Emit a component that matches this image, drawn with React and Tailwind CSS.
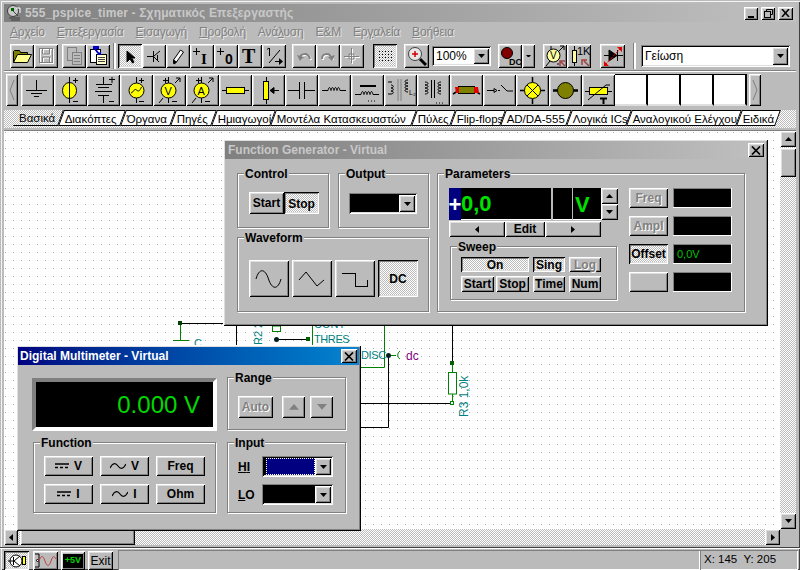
import React from 'react';

const raised = 'shadow-[inset_1px_1px_0_#fff,inset_-1px_-1px_0_#000,inset_2px_2px_0_#dedede,inset_-2px_-2px_0_#808080]';
const pressed = 'shadow-[inset_1px_1px_0_#000,inset_-1px_-1px_0_#fff,inset_2px_2px_0_#808080,inset_-2px_-2px_0_#dedede]';
const sunken = 'shadow-[inset_1px_1px_0_#808080,inset_-1px_-1px_0_#fff,inset_2px_2px_0_#000,inset_-2px_-2px_0_#dedede]';
const dither = 'bg-[repeating-conic-gradient(#fff_0_25%,#bbb_0_50%)] bg-[length:2px_2px]';
const disabled = 'text-[#808080] [text-shadow:1px_1px_0_#fff]';

const Btn = ({ down, className = '', children }) => (
  <div className={`flex items-center justify-center shrink-0 ${down ? `${pressed} ${dither}` : `${raised} bg-[#bbb]`} ${className}`}>{children}</div>
);

const Tri = ({ dir = 'down', color = '#000', size = 7 }) => {
  const pts = { down: '0,0 7,0 3.5,4', up: '0,4 7,4 3.5,0', left: '4,0 4,7 0,3.5', right: '0,0 0,7 4,3.5' }[dir];
  const vb = dir === 'left' || dir === 'right' ? '0 0 4 7' : '0 0 7 4';
  const w = dir === 'left' || dir === 'right' ? (size * 4) / 7 : size;
  const h = dir === 'left' || dir === 'right' ? size : (size * 4) / 7;
  return <svg width={w} height={h} viewBox={vb}><polygon points={pts} fill={color} /></svg>;
};

const Ico = ({ w = 24, h = 24, children }) => (
  <svg width={w} height={h} viewBox={`0 0 ${w} ${h}`} fill="none" stroke="#000">{children}</svg>
);

const Pm = ({ x = 21, top = 6, bot = 27 }) => (
  <path d={`M${x - 2} ${top}.5h5M${x + 0.5} ${top - 2}v5M${x - 2} ${bot}.5h5`} />
);

/* first toolbar */
const tools = {
  open: (
    <Ico>
      <path d="M3.5 18.5V7.5l1-1h5l1 2h7v2" fill="#808000" />
      <path d="M3.5 18.5l4-8h14l-4 8z" fill="#ffff90" />
    </Ico>
  ),
  save: (
    <Ico>
      <g stroke="#fff" transform="translate(1 1)"><rect x="5.5" y="4.5" width="13" height="14" /><path d="M8.5 5v5h7V5M8.5 18v-5h7v5" /></g>
      <g stroke="#808080"><rect x="5.5" y="4.5" width="13" height="14" /><path d="M8.5 5v5h7V5M8.5 18v-5h7v5" /></g>
    </Ico>
  ),
  copy: (
    <Ico>
      <g stroke="#808080" fill="#bbb"><rect x="5.5" y="3.5" width="9" height="13" /><rect x="10.5" y="8.5" width="9" height="12" /><path d="M12 11.5h6M12 14.5h6M12 17.5h6" /></g>
    </Ico>
  ),
  paste: (
    <Ico>
      <rect x="4.5" y="5.5" width="10" height="13" fill="#fff" />
      <rect x="10.5" y="10.5" width="10" height="10" fill="#ffffd0" />
      <path d="M12 13.5h7M12 15.5h7M12 17.5h7" stroke="#404040" />
      <rect x="7" y="2" width="6" height="3" fill="#0000c0" stroke="none" />
      <path d="M9 5l4 5" stroke="#0000c0" strokeWidth="2" />
      <path d="M11 11h4v-4z" fill="#0000c0" stroke="none" />
    </Ico>
  ),
  arrow: (
    <Ico>
      <path d="M9 7v11l3-3 2.500 4 1.500-1-2.500-4H17z" fill="#000" />
    </Ico>
  ),
  wire: (
    <Ico>
      <path d="M5 12.500h6M11.500 7v11M12 12l6-5M12 13l5 5M15.500 11v6" />
    </Ico>
  ),
  pencil: (
    <Ico>
      <path d="M8 20l-.5-4 7-10 3 2-7 10z" fill="#fff" />
      <path d="M8 20l-.5-4 3 2z" fill="#000" />
    </Ico>
  ),
  plusI: (
    <Ico>
      <path d="M6.500 4v7M3 7.500h7" />
      <text x="11" y="20" fontSize="15" fontWeight="700" fill="#000" stroke="none" fontFamily="'Liberation Serif',serif">I</text>
    </Ico>
  ),
  plus0: (
    <Ico>
      <path d="M6.500 4v7M3 7.500h7" />
      <text x="11" y="20" fontSize="14" fontWeight="700" fill="#000" stroke="none" fontFamily="'Liberation Sans',sans-serif">0</text>
    </Ico>
  ),
  text: (
    <Ico>
      <text x="4" y="19" fontSize="20" fontWeight="700" fill="#000" stroke="none" fontFamily="'Liberation Serif',serif">T</text>
    </Ico>
  ),
  rot: (
    <Ico>
      <path d="M7.500 4v8M5 5.500l2-1.500M7 19l11-13M13 17.500h5" />
      <path d="M17 14v7l4-3.500z" fill="#000" stroke="none" />
    </Ico>
  ),
  undo: (
    <Ico>
      <path d="M8 15c0-6 8-7 10 0" stroke="#fff" strokeWidth="2" transform="translate(1 1)" />
      <path d="M8 15c0-6 8-7 10 0" stroke="#808080" strokeWidth="2" />
      <path d="M5 11l3 6 4-4z" fill="#808080" stroke="none" />
    </Ico>
  ),
  redo: (
    <Ico>
      <path d="M6 15c0-6 8-7 10 0" stroke="#fff" strokeWidth="2" transform="translate(1 1)" />
      <path d="M6 15c0-6 8-7 10 0" stroke="#808080" strokeWidth="2" />
      <path d="M19 11l-3 6-4-4z" fill="#808080" stroke="none" />
    </Ico>
  ),
  cross: (
    <Ico>
      <path d="M12.500 5v15M5 13.500h15M10 11h5v5h-5z" stroke="#fff" />
      <path d="M11.500 4v15M4 12.500h15M9 10h5v5H9z" stroke="#808080" />
    </Ico>
  ),
  grid: (
    <Ico>
      <path d="M6 7.500h13M6 10.500h13M6 13.500h13M6 16.500h13" stroke="#000" strokeDasharray="1 2" />
    </Ico>
  ),
  zoom: (
    <Ico>
      <path d="M15 15l6 6" strokeWidth="3" />
      <circle cx="10" cy="10" r="6.500" fill="#e8e8e8" stroke="#404040" />
      <path d="M7 10h6M10 7v6" stroke="#d00000" strokeWidth="1.500" />
    </Ico>
  ),
  dc: (
    <Ico>
      <circle cx="9" cy="9" r="5.500" fill="#800000" />
      <text x="11" y="21" fontSize="9" fontWeight="700" fill="#000" stroke="none" fontFamily="'Liberation Sans',sans-serif">DC</text>
    </Ico>
  ),
  volt: (
    <Ico>
      <path d="M3 22l4-5M16 7l5-5M17 2h4v4M8 2v4M14 20h2" />
      <circle cx="10.500" cy="11.500" r="6.500" fill="#ffffa0" />
      <text x="7" y="15" fontSize="10" fill="#000" stroke="none" fontFamily="'Liberation Sans',sans-serif">V</text>
      <path d="M22 22l-4-4M17 22v-5h5" stroke="#a04040" strokeWidth="1.500" />
    </Ico>
  ),
  res: (
    <Ico>
      <path d="M7.500 2v20" />
      <rect x="5.500" y="6.500" width="4" height="12" fill="#ffffa0" />
      <text x="10" y="11" fontSize="11" fill="#000" stroke="none" fontFamily="'Liberation Sans',sans-serif">1K</text>
      <path d="M22 22l-5-5M15 21v-5h5" stroke="#a04040" strokeWidth="1.500" />
    </Ico>
  ),
  diode: (
    <Ico>
      <path d="M3 11.500h19M16.500 6v11" />
      <path d="M8 6v11l8-5.500z" fill="#000" />
      <path d="M4 21L20 4" stroke="#e00000" strokeDasharray="3 1" />
      <path d="M3 22v-5l5 5zM21 3v5l-5-5z" fill="#e00000" stroke="none" />
    </Ico>
  ),
};

/* component palette */
const Palette = ({ children }) => <Ico w={33} h={32}>{children}</Ico>;
const parts = [
  <Palette key="gnd"><path d="M15.500 6v10M5 16.500h21M10 19.500h11M13 22.500h5" /></Palette>,
  <Palette key="dci"><path d="M15.500 3v26" /><ellipse cx="15.500" cy="16.500" rx="7" ry="8" fill="#ffff00" /><path d="M15.500 8v17" /><Pm /></Palette>,
  <Palette key="bat"><path d="M16.500 3v7M9 10.500h16M11 13.500h11M8 17.500h17M11 21.500h11M16.500 22v7" /><path d="M22 5.500h6M25 3v6M22 27.500h5" /></Palette>,
  <Palette key="ac"><path d="M16.500 3v6M16.500 23v6" /><circle cx="16.500" cy="16.500" r="7.500" fill="#ffff00" /><path d="M11 19c3-1 3-5 5.500-3s3 1 5-3" /><Pm x={21} /></Palette>,
  <Palette key="vm"><path d="M15.500 3v6M15.500 23v6M6 29l4-5M22 9l5-5M23 4h4v4" /><circle cx="15.500" cy="16.500" r="7.500" fill="#ffff00" /><text x="11.500" y="21" fontSize="11" fill="#000" stroke="none" fontFamily="'Liberation Sans',sans-serif">V</text><path d="M10 6.500h5M12.500 4v5M19 27.500h5" /></Palette>,
  <Palette key="am"><path d="M15.500 3v6M15.500 23v6M6 29l4-5M22 9l5-5M23 4h4v4" /><circle cx="15.500" cy="16.500" r="7.500" fill="#ffff00" /><text x="11.500" y="21" fontSize="11" fill="#000" stroke="none" fontFamily="'Liberation Sans',sans-serif">A</text><path d="M10 6.500h5M12.500 4v5M19 27.500h5" /></Palette>,
  <Palette key="r"><path d="M3 16.500h27" /><rect x="7.500" y="13.500" width="18" height="6" fill="#ffff00" /></Palette>,
  <Palette key="pot"><path d="M14.500 3v27" /><rect x="11.500" y="7.500" width="5" height="18" fill="#ffff00" /><path d="M18 16.500h9M18 16.500l4-3v6z" fill="#000" /></Palette>,
  <Palette key="c"><path d="M3 16.500h11M14.500 8v17M19.500 8v17M20 16.500h10" /></Palette>,
  <Palette key="l"><path d="M4 16.500h6c1-4 2-4 3 0 1-4 2-4 3 0 1-4 2-4 3 0 1-4 2-4 3 0h6" /></Palette>,
  <Palette key="lc"><path d="M4 20.500h6c1-4 2-4 3 0 1-4 2-4 3 0 1-4 2-4 3 0 1-4 2-4 3 0h6" /><path d="M9 12h16" strokeWidth="2" /><path d="M17 27h1M20 27h1M23 27h1" /></Palette>,
  <Palette key="xf"><path d="M7 11c3 0 3 3 0 3 3 0 3 3 0 3 3 0 3 3 0 3h-3M4 8h4" /><path d="M14 5v22M17 5v22" stroke="#808080" /><path d="M24 6c-4 0-4 3 0 3-4 0-4 3 0 3-4 0-4 3 0 3-4 0-4 3 0 3" /><text x="25" y="21" fontSize="7" fill="#000" stroke="none" fontFamily="'Liberation Sans',sans-serif">L₂</text></Palette>,
  <Palette key="xf2"><path d="M8 8c4 0 4 3 0 3 4 0 4 3 0 3 4 0 4 3 0 3 4 0 4 3 0 3" /><path d="M14.500 6v18M17.500 6v18" /><path d="M24 8c-4 0-4 3 0 3-4 0-4 3 0 3-4 0-4 3 0 3-4 0-4 3 0 3" /><path d="M19 29h1M22 29h1M25 29h1" /></Palette>,
  <Palette key="rel"><path d="M3 20l5-3M25 17l5 3" strokeWidth="1.500" /><rect x="8.500" y="12.500" width="16" height="7" fill="#808000" /><path d="M5 13h4v6H6zM24 13h4l1 6h-5z" fill="#e00000" stroke="none" /></Palette>,
  <Palette key="sw"><path d="M4 16.500h7M11 14.500l3 2-3 2zM15 16.500h2M18 11l6 6h6" /></Palette>,
  <Palette key="lamp"><path d="M16.500 3v5M16.500 25v5M4 16.500h5M24 16.500h5" strokeWidth="1.500" /><circle cx="16.500" cy="16.500" r="8" fill="#ffff00" /><path d="M11 11l11 11M22 11L11 22" /></Palette>,
  <Palette key="mot"><path d="M4 16.500h6M23 16.500h6" strokeWidth="2.500" /><circle cx="16.500" cy="16.500" r="8" fill="#808000" /></Palette>,
  <Palette key="var"><path d="M3 17.500h27" /><rect x="7.500" y="13.500" width="18" height="7" fill="#ffff00" /><path d="M6 26l18-15h4" /><path d="M18 24.500h7M21.500 25v5" strokeWidth="2" /></Palette>,
];

const menus = [
  ['', 'Α', 'ρχείο'],
  ['', 'Ε', 'πεξεργασία'],
  ['', 'Ε', 'ισαγωγή'],
  ['', 'Π', 'ροβολή'],
  ['Ανά', 'λ', 'υση'],
  ['', '', 'E&M'],
  ['Ερ', 'γ', 'αλεία'],
  ['', 'Β', 'οήθεια'],
];

const tabs = [
  ['Βασικά', 'w-[45px]'],
  ['Διακόπτες', 'w-[62px]'],
  ['Όργανα', 'w-[50px]'],
  ['Πηγές', 'w-[41px]'],
  ['Ημιαγωγοί', 'w-[59px]'],
  ['Μοντέλα Κατασκευαστών', 'w-[141px]'],
  ['Πύλες', 'w-[39px]'],
  ['Flip-flops', 'w-[50px]'],
  ['AD/DA-555', 'w-[66px]'],
  ['Λογικά ICs', 'w-[60px]'],
  ['Αναλογικού Ελέγχου', 'w-[110px]'],
  ['Ειδικά', 'w-[39px]'],
];

const Combo = ({ className = '', fill = 'bg-white', children }) => (
  <div className={`${sunken} ${fill} flex items-stretch p-[2px] ${className}`}>
    <div className="flex-1 flex items-center pl-[2px] text-[13px] text-black overflow-hidden">{children}</div>
    <Btn className="w-[16px]"><Tri /></Btn>
  </div>
);

const Group = ({ label, className = '', children }) => (
  <div className={`relative border border-[#808080] shadow-[1px_1px_0_#fff,inset_1px_1px_0_#fff] ${className}`}>
    <span className="absolute -top-[6px] left-[6px] bg-[#bbb] px-[1px] text-[12px] leading-[13px] font-bold text-black">{label}</span>
    {children}
  </div>
);

const Box = ({ children }) => (
  <div className="w-[59px] h-[20px] bg-black shadow-[inset_-1px_-1px_0_#fff,inset_1px_1px_0_#808080] flex items-center pl-[4px] text-[11px] text-[#00c000]">{children}</div>
);

const Close = () => (
  <Btn className="w-[16px] h-[14px]">
    <svg width="10" height="9" viewBox="0 0 10 9" stroke="#000" strokeWidth="1.700"><path d="M1 0.500l8 8M9 0.500l-8 8" /></svg>
  </Btn>
);

const Dc = () => (
  <svg width="14" height="6" viewBox="0 0 14 6" stroke="#000"><path d="M0 1h14" strokeWidth="1.500" /><path d="M0 4.500h14" strokeDasharray="3 2" strokeWidth="1.500" /></svg>
);
const Ac = () => (
  <svg width="16" height="7" viewBox="0 0 16 7" fill="none" stroke="#000" strokeWidth="1.200"><path d="M0 5C3-1 6 0 8 3s5 4 8-2" /></svg>
);

const FunctionGenerator = () => (
  <div className={`absolute left-[223px] top-[139px] w-[545px] h-[187px] p-[2px] bg-[#bbb] ${raised}`}>
    <div className="h-[18px] flex items-center justify-between pl-[3px] pr-[2px] bg-linear-to-r from-[#808080] to-[#c0c0c0]">
      <span className="text-[12px] font-bold text-[#c8c8c8]">Function Generator - Virtual</span>
      <Close />
    </div>
    <div className="flex pl-[12px] pt-[14px] gap-[8px]">
      <div className="flex flex-col gap-[9px] w-[192px]">
        <div className="flex gap-[9px]">
          <Group label="Control" className="w-[92px] h-[55px] pl-[11px] pt-[18px]">
            <div className="flex text-[12px] font-bold text-black">
              <Btn className="w-[35px] h-[22px]">Start</Btn>
              <Btn down className="w-[35px] h-[22px] pt-px">Stop</Btn>
            </div>
          </Group>
          <Group label="Output" className="w-[91px] h-[55px] pl-[10px] pt-[19px]">
            <Combo fill="bg-black" className="w-[68px] h-[21px]" />
          </Group>
        </div>
        <Group label="Waveform" className="h-[75px] pl-[11px] pt-[22px]">
          <div className="flex gap-[3px]">
            <Btn className="w-[40px] h-[37px]">
              <svg width="40" height="37" viewBox="0 0 40 37" fill="none" stroke="#000"><path d="M7 19C10 8 16 8 19.500 19S29 30 32 19" /></svg>
            </Btn>
            <Btn className="w-[40px] h-[37px]">
              <svg width="40" height="37" viewBox="0 0 40 37" fill="none" stroke="#000"><path d="M7 20l7-8 11 14 7-6" /></svg>
            </Btn>
            <Btn className="w-[40px] h-[37px]">
              <svg width="40" height="37" viewBox="0 0 40 37" fill="none" stroke="#000" shapeRendering="crispEdges"><path d="M7 13.500h13.500v13H32V20" /></svg>
            </Btn>
            <Btn down className="w-[40px] h-[37px] text-[12px] font-bold text-black">DC</Btn>
          </div>
        </Group>
      </div>
      <Group label="Parameters" className="w-[308px] h-[139px] flex pl-[11px] pt-[14px]">
        <div className="w-[169px]">
          <div className="flex h-[32px]">
            <div className="w-[152px] bg-black flex items-stretch shadow-[inset_0_-1px_0_#fff]">
              <div className="w-[12px] bg-[#000080] flex items-center justify-center text-[22px] font-bold text-white">+</div>
              <div className="w-[90px] flex items-center text-[22px] font-bold text-[#00e000] leading-none">0,0</div>
              <div className="w-[2px] bg-[#bbb]" />
              <div className="w-[19px]" />
              <div className="w-[1px] bg-[#bbb]" />
              <div className="flex-1 pl-[2px] flex items-center text-[22px] font-bold text-[#00e000]">V</div>
            </div>
            <div className="w-[17px] flex flex-col">
              <Btn className="h-[16px]"><Tri dir="up" /></Btn>
              <Btn className="h-[16px]"><Tri /></Btn>
            </div>
          </div>
          <div className="flex h-[16px] w-[152px] mt-px text-[12px] font-bold text-black">
            <Btn className="w-[56px]"><Tri dir="left" /></Btn>
            <Btn className="w-[40px]">Edit</Btn>
            <Btn className="w-[56px]"><Tri dir="right" /></Btn>
          </div>
          <Group label="Sweep" className="ml-px mt-[9px] w-[167px] h-[54px] pl-[10px] pt-[10px]">
            <div className="flex flex-col gap-[4px] text-[12px] font-bold text-black w-[140px]">
              <div className="flex gap-[4px] h-[15px]">
                <Btn down className="w-[68px]">On</Btn>
                <Btn down className="w-[32px]">Sing</Btn>
                <Btn className={`w-[32px] ${disabled}`}>Log</Btn>
              </div>
              <div className="flex gap-[4px] h-[16px]">
                <div className="flex gap-[2px]">
                  <Btn className="w-[33px]">Start</Btn>
                  <Btn className="w-[33px]">Stop</Btn>
                </div>
                <Btn className="w-[32px]">Time</Btn>
                <Btn className="w-[32px]">Num</Btn>
              </div>
            </div>
          </Group>
        </div>
        <div className="ml-[11px] flex flex-col gap-[8px] text-[12px] font-bold">
          <div className="flex gap-[5px] h-[20px]"><Btn className={`w-[39px] ${disabled}`}>Freq</Btn><Box /></div>
          <div className="flex gap-[5px] h-[20px]"><Btn className={`w-[39px] ${disabled}`}>Ampl</Btn><Box /></div>
          <div className="flex gap-[5px] h-[20px]"><Btn down className="w-[39px] text-black">Offset</Btn><Box><span className="font-normal">0,0V</span></Box></div>
          <div className="flex gap-[5px] h-[20px]"><Btn className="w-[39px]" /><Box /></div>
        </div>
      </Group>
    </div>
  </div>
);

const Multimeter = () => (
  <div className={`absolute left-[16px] top-[345px] w-[345px] h-[186px] p-[2px] bg-[#bbb] ${raised}`}>
    <div className="h-[18px] flex items-center justify-between pl-[2px] pr-[2px] bg-linear-to-r from-[#000080] to-[#1084d0]">
      <span className="text-[12px] font-bold text-white">Digital Multimeter - Virtual</span>
      <Close />
    </div>
    <div className="flex pl-[14px] pt-[12px] gap-[10px]">
      <div className="w-[185px]">
        <div className="mt-px h-[53px] bg-black border-[4px] border-t-[#808080] border-l-[#808080] border-r-white border-b-white flex items-center justify-end pr-[13px] text-[24px] text-[#00d800]">0.000 V</div>
        <Group label="Function" className="ml-px mt-[11px] w-[183px] h-[71px] pl-[10px] pt-[13px]">
          <div className="grid grid-cols-[49px_49px_49px] gap-x-[7px] gap-y-[8px] text-[12px] font-bold text-black">
            <Btn className="h-[20px] gap-[5px]"><Dc />V</Btn>
            <Btn className="h-[20px] gap-[5px]"><Ac />V</Btn>
            <Btn className="h-[20px]">Freq</Btn>
            <Btn className="h-[20px] gap-[5px]"><Dc />I</Btn>
            <Btn className="h-[20px] gap-[5px]"><Ac />I</Btn>
            <Btn className="h-[20px]">Ohm</Btn>
          </div>
        </Group>
      </div>
      <div className="w-[119px]">
        <Group label="Range" className="h-[53px] pl-[10px] pt-[18px]">
          <div className="flex text-[12px] font-bold">
            <Btn className={`w-[35px] h-[22px] mr-[9px] ${disabled}`}>Auto</Btn>
            <Btn className="w-[23px] h-[22px] mr-[5px]"><Tri dir="up" color="#808080" size={10} /></Btn>
            <Btn className="w-[23px] h-[22px]"><Tri color="#808080" size={10} /></Btn>
          </div>
        </Group>
        <Group label="Input" className="mt-[12px] h-[71px] pl-[10px] pt-[13px]">
          <div className="flex items-center h-[21px] mb-[7px]">
            <span className="w-[24px] text-[12px] font-bold text-black"><u>H</u><u>I</u></span>
            <Combo fill="bg-black" className="w-[71px] h-[21px]">
              <div className="w-full h-full bg-[#000080] outline-1 -outline-offset-1 outline-dotted outline-white" />
            </Combo>
          </div>
          <div className="flex items-center h-[21px]">
            <span className="w-[24px] text-[12px] font-bold text-black"><u>L</u>O</span>
            <Combo fill="bg-black" className="w-[71px] h-[21px]" />
          </div>
        </Group>
      </div>
    </div>
  </div>
);

const teal = '#008080';
const green = '#008000';
const labelFont = { fontFamily: "'Liberation Sans',sans-serif", fontSize: 11 };

/* grid and circuit, in page coordinates */
const Schematic = () => (
  <svg className="absolute inset-0" width="776" height="398" viewBox="4 131 776 398" fill="none">
    <defs>
      <pattern id="dots" x="5" y="4" width="8" height="8" patternUnits="userSpaceOnUse">
        <rect width="1" height="1" fill="#a8a8a8" />
      </pattern>
    </defs>
    <rect x="4" y="131" width="776" height="398" fill="url(#dots)" />
    <g stroke="#000">
      <path d="M180 323.500h45M236.500 325v22M452.500 325v38M361 403.500h91M388.500 355v72.500H361M276.500 339.500H308" />
    </g>
    <g stroke={green}>
      <path d="M180.500 323v18M173 340.500h16M276.500 326v6M312.500 325v22M384.500 325v42.500H361M388 355.500h8M452.500 363v9M452.500 394v9" />
      <rect x="272.500" y="326" width="8" height="5.500" fill="#fff" />
      <rect x="448.500" y="372.500" width="8" height="21.500" fill="#fff" />
      <path d="M400 351c-3 2-3 6 0 8" />
    </g>
    <rect x="178" y="321" width="4" height="4" fill="#004000" />
    <circle cx="276.500" cy="339.500" r="2.500" fill="#002020" />
    <rect x="306" y="337" width="4" height="4" fill="#006000" />
    <circle cx="388.500" cy="355.500" r="2.500" fill="#002020" />
    <rect x="450" y="361" width="4" height="4" fill="#006000" />
    <rect x="450.500" y="401.500" width="3" height="3" fill="#fff" stroke={green} />
    <g fill={teal} stroke="none" style={labelFont}>
      <text x="194" y="347">C</text>
      <text x="314" y="328">CONT</text>
      <text x="314" y="343" letterSpacing="-0.4">THRES</text>
      <text x="361" y="359" letterSpacing="-0.4">DISC</text>
      <text transform="translate(262 345) rotate(-90)">R2 2,2k</text>
      <text transform="translate(468 417) rotate(-90)" fontSize="12" style={{ fontSize: 12 }}>R3 1,0k</text>
    </g>
    <text x="406" y="360" fill="#800080" style={{ ...labelFont, fontSize: 12 }}>dc</text>
  </svg>
);

export default function App() {
  return (
    <div className="relative w-[800px] h-[570px] overflow-hidden flex flex-col pt-[4px] bg-[#bbb] font-['Liberation_Sans',Arial,sans-serif] shadow-[inset_1px_1px_0_#bbb,inset_2px_2px_0_#f4f4f4,inset_-1px_-1px_0_#404040]">
      {/* title bar */}
      <div className="mx-[4px] h-[18px] shrink-0 flex items-center bg-linear-to-r from-[#808080] to-[#c0c0c0]">
        <svg width="18" height="18" viewBox="0 0 18 18" className="ml-[2px]" fill="none" stroke="#404040">
          <circle cx="7" cy="7" r="5.500" fill="#c8c8c8" />
          <path d="M3 14h11M7 7l5 5M5 16h9" />
          <path d="M5 4h3v3H5z" fill="#006000" stroke="none" />
          <path d="M10 4h4v5" stroke="#fff" />
        </svg>
        <span className="ml-[1px] text-[12px] font-bold text-[#c8c8c8] tracking-[0.15px]">555_pspice_timer - Σχηματικός Επεξεργαστής</span>
        <div className="ml-auto mr-[3px] flex gap-[3px] items-center">
          <Btn className="w-[14px] h-[13px] items-end pb-[2px]"><div className="w-[6px] h-[2px] bg-black" /></Btn>
          <Btn className="w-[14px] h-[13px]"><svg width="9" height="9" viewBox="0 0 9 9" fill="none" stroke="#000"><path d="M2.500 2.500V.5h6v5h-2" /><rect x="0.500" y="2.500" width="6" height="6" /></svg></Btn>
          <Btn className="w-[15px] h-[13px]"><svg width="9" height="8" viewBox="0 0 9 8" stroke="#000" strokeWidth="1.500"><path d="M1 0l7 8M8 0L1 8" /></svg></Btn>
        </div>
      </div>

      {/* menu */}
      <div className="h-[20px] shrink-0 flex items-center pl-[10px] gap-[12px] text-[12px] tracking-[-0.2px] text-[#808080] [text-shadow:1px_1px_0_#e8e8e8]">
        {menus.map(([a, u, b], i) => (
          <span key={i}>{a}<u>{u}</u>{b}</span>
        ))}
      </div>

      {/* main toolbar */}
      <div className="h-[28px] shrink-0 flex items-center pl-[10px]">
        <Btn className="w-[24px] h-[24px]">{tools.open}</Btn>
        <Btn className="w-[24px] h-[24px]">{tools.save}</Btn>
        <div className="w-[4px]" />
        <Btn className="w-[24px] h-[24px]">{tools.copy}</Btn>
        <Btn className="w-[24px] h-[24px]">{tools.paste}</Btn>
        <div className="w-[3px] h-[26px] ml-[3px] mr-[2px] border-l border-[#808080] border-r-2 border-r-white" />
        <Btn down className="w-[24px] h-[24px]">{tools.arrow}</Btn>
        <Btn className="w-[24px] h-[24px]">{tools.wire}</Btn>
        <Btn className="w-[24px] h-[24px]">{tools.pencil}</Btn>
        <Btn className="w-[24px] h-[24px]">{tools.plusI}</Btn>
        <Btn className="w-[24px] h-[24px]">{tools.plus0}</Btn>
        <Btn className="w-[24px] h-[24px]">{tools.text}</Btn>
        <Btn className="w-[24px] h-[24px]">{tools.rot}</Btn>
        <div className="w-[6px]" />
        <Btn className="w-[24px] h-[24px]">{tools.undo}</Btn>
        <Btn className="w-[24px] h-[24px]">{tools.redo}</Btn>
        <Btn className="w-[24px] h-[24px]">{tools.cross}</Btn>
        <div className="w-[9px]" />
        <Btn down className="w-[24px] h-[24px]">{tools.grid}</Btn>
        <div className="w-[7px]" />
        <Btn className="w-[25px] h-[24px]">{tools.zoom}</Btn>
        <div className="w-[3px]" />
        <Combo className="w-[59px] h-[20px]"><span className="text-[12px]">100%</span></Combo>
        <div className="w-[7px]" />
        <Btn className="w-[24px] h-[24px]">{tools.dc}</Btn>
        <Btn className="w-[13px] h-[24px]"><Tri size={5} /></Btn>
        <div className="w-[8px]" />
        <Btn className="w-[24px] h-[24px]">{tools.volt}</Btn>
        <Btn className="w-[24px] h-[24px]">{tools.res}</Btn>
        <div className="w-[9px]" />
        <Btn className="w-[25px] h-[24px]">{tools.diode}</Btn>
        <div className="w-[3px] h-[26px] ml-[8px] mr-[5px] border-l border-[#808080] border-r-2 border-r-white" />
        <Combo className="w-[149px] h-[22px]"><span className="text-[12px]">Γείωση</span></Combo>
      </div>

      {/* groove */}
      <div className="h-[2px] shrink-0 mx-[4px] border-t border-[#808080] border-b border-b-white" />

      {/* parts palette */}
      <div className="h-[36px] shrink-0 flex items-start pt-[2px] pl-[6px]">
        <Btn className="w-[12px] h-[32px] mr-[3px]"><svg width="6" height="20" viewBox="0 0 6 20" fill="none" stroke="#808080"><path d="M5 0L1 10l4 10" /></svg></Btn>
        <div className="flex">
          {parts.map((icon, i) => (
            <Btn key={i} className="w-[33px] h-[32px]">{icon}</Btn>
          ))}
          {[0, 1, 2, 3].map((i) => (
            <div key={i} className="w-[33px] h-[32px] bg-white border-r-2 border-black border-t border-t-black border-b-2 border-b-[#dedede]" />
          ))}
        </div>
        <Btn className="w-[12px] h-[32px] ml-[2px]"><svg width="6" height="20" viewBox="0 0 6 20" fill="none" stroke="#808080"><path d="M1 0l4 10L1 20" /></svg></Btn>
      </div>

      {/* tabs */}
      <div className={`mt-[2px] mx-[4px] h-[18px] shrink-0 flex items-start pl-[12px] ${dither}`}>
        {tabs.map(([label, w], i) => (
          <div
            key={label}
            className={`h-[16px] shrink-0 -skew-x-[20deg] border-r border-black border-b ${i === 0 ? 'border-l-0' : 'bg-white border-t border-l'} ${w}`}
          >
            <div className="skew-x-[20deg] pl-[3px] text-[11.5px] leading-[16px] text-black whitespace-nowrap">{label}</div>
          </div>
        ))}
      </div>

      {/* canvas with scrollbars */}
      <div className="mt-[2px] mx-[4px] h-[399px] shrink-0 flex border-t border-[#808080]">
        <div className="relative w-[776px] bg-white">
          <Schematic />
        </div>
        <div className={`w-[16px] flex flex-col ${dither}`}>
          <Btn className="h-[16px]"><Tri dir="up" /></Btn>
          <Btn className="h-[29px] mt-px" />
          <Btn className="h-[16px] mt-auto"><Tri /></Btn>
        </div>
      </div>
      <div className="mx-[4px] h-[16px] shrink-0 flex">
        <div className={`w-[776px] flex ${dither}`}>
          <Btn className="w-[14px]"><Tri dir="left" /></Btn>
          <Btn className="w-[115px] ml-[2px]" />
          <Btn className="w-[15px] ml-auto"><Tri dir="right" /></Btn>
        </div>
      </div>

      {/* status bar */}
      <div className="mt-[2px] flex-1 border-t border-[#404040] flex items-end pl-[4px] pr-[2px] shadow-[inset_0_1px_0_#fff]">
        <Btn down className="w-[25px] h-[19px]">
          <svg width="20" height="17" viewBox="0 0 20 17" fill="none" stroke="#000"><circle cx="9" cy="9" r="6" fill="#fff" /><path d="M1 9h5M6.500 5v8M7 9l6-5M7 9l6 5" /><rect x="15.500" y="4.500" width="3" height="8" fill="#ffff00" /></svg>
        </Btn>
        <Btn className="w-[25px] h-[19px] ml-[4px]">
          <svg width="23" height="15" viewBox="0 0 23 15" fill="none"><path d="M1 1h4v13H1" stroke="#000" /><circle cx="3.500" cy="7.500" r="1" fill="#fff" stroke="#000" /><path d="M5 8c2-6 4-6 6 0s4 6 6 0 3-5 5-2" stroke="#c04040" /></svg>
        </Btn>
        <Btn className="w-[24px] h-[19px] ml-[3px]">
          <div className="w-[20px] h-[14px] bg-black flex items-center justify-center text-[9px] font-bold leading-none text-[#00d000]">+5V</div>
        </Btn>
        <Btn className="w-[25px] h-[19px] ml-[3px] text-[12px] text-black">Exit</Btn>
        <div className="w-[582px] h-[20px] ml-[5px] shadow-[inset_1px_1px_0_#808080,inset_-1px_-1px_0_#fff]" />
        <div className="flex-1 h-[20px] flex items-center pl-[4px] text-[11.5px] text-black shadow-[inset_1px_1px_0_#808080,inset_-1px_-1px_0_#fff]">X: 145&nbsp; Y: 205</div>
      </div>

      <FunctionGenerator />
      <Multimeter />
    </div>
  );
}
